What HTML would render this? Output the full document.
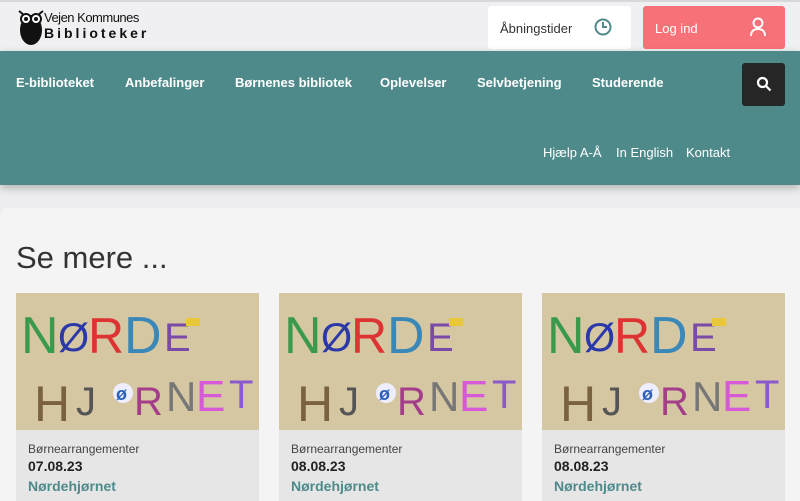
<!DOCTYPE html><html><head><meta charset="utf-8"><style>
*{margin:0;padding:0;box-sizing:border-box}
body{width:800px;height:501px;overflow:hidden;background:#ededef;font-family:"Liberation Sans",sans-serif;position:relative}
.top{position:absolute;left:0;top:0;width:800px;height:51px;background:#f0f0f2;border-top:2px solid #d8d8da}
.nav{position:absolute;left:0;top:51px;width:800px;height:134px;background:#4f8a8b;box-shadow:0 3px 8px rgba(0,0,0,.25)}
.nav .m{position:absolute;color:#fff;font-size:13px;font-weight:bold;top:24px}
.nav .s{position:absolute;color:#fff;font-size:13px;font-weight:normal;top:94px}
.btn{position:absolute;top:4px;height:43px;border-radius:3px;font-size:13px}
.main{position:absolute;left:0;top:208px;width:800px;height:293px;background:#f4f4f5;border-radius:8px 0 0 0}
h1{position:absolute;left:16px;top:240px;font-size:31px;font-weight:normal;color:#333}
.card{position:absolute;top:293px;width:243px;height:208px;background:#e6e6e6}
.card svg{display:block}
.card .c{position:absolute;left:12px;top:149px;font-size:12px;color:#444}
.card .d{position:absolute;left:12px;top:165px;font-size:14px;font-weight:bold;color:#222}
.card .t{position:absolute;left:12px;top:185px;font-size:14px;font-weight:bold;color:#4f8a8b}
</style></head><body>
<div class="top">
 <svg style="position:absolute;left:16px;top:6px" width="30" height="38" viewBox="0 0 30 38"><ellipse cx="15" cy="22" rx="11" ry="15" fill="#111"/><circle cx="10" cy="11" r="5" fill="#fff" stroke="#111" stroke-width="2"/><circle cx="20" cy="11" r="5" fill="#fff" stroke="#111" stroke-width="2"/><circle cx="10" cy="11" r="2" fill="#111"/><circle cx="20" cy="11" r="2" fill="#111"/><path d="M3 3l5 4M27 3l-5 4" stroke="#111" stroke-width="2"/></svg>
 <div style="position:absolute;left:44px;top:8px;font-size:13px;letter-spacing:-.5px;color:#111">Vejen Kommunes</div>
 <div style="position:absolute;left:44px;top:23px;font-size:14px;font-weight:bold;letter-spacing:3px;color:#111">Biblioteker</div>
 <div class="btn" style="left:488px;width:143px;background:#fff"><span style="position:absolute;left:12px;top:15px;color:#333">Åbningstider</span>
 <svg style="position:absolute;left:106px;top:12px" width="18" height="18" viewBox="0 0 18 18" fill="none" stroke="#4f8a8b" stroke-width="2"><circle cx="9" cy="9" r="7.5"/><path d="M9 4v5h4"/></svg></div>
 <div class="btn" style="left:643px;width:142px;background:#f67278"><span style="position:absolute;left:12px;top:15px;color:#fff">Log ind</span>
 <svg style="position:absolute;left:106px;top:11px" width="18" height="20" viewBox="0 0 18 20" fill="none" stroke="#fff" stroke-width="2"><circle cx="9" cy="6" r="4.5"/><path d="M2 19c0-5 3-7 7-7s7 2 7 7"/></svg></div>
</div>
<div class="nav">
 <span class="m" style="left:16px">E-biblioteket</span><span class="m" style="left:125px">Anbefalinger</span><span class="m" style="left:235px">Børnenes bibliotek</span><span class="m" style="left:380px">Oplevelser</span><span class="m" style="left:477px">Selvbetjening</span><span class="m" style="left:592px">Studerende</span>
 <div style="position:absolute;left:742px;top:12px;width:43px;height:43px;background:#262626;border-radius:3px"><svg style="position:absolute;left:14px;top:13px" width="16" height="16" viewBox="0 0 16 16" fill="none" stroke="#fff" stroke-width="2.2"><circle cx="6.5" cy="6.5" r="4.5"/><path d="M10 10l4.5 4.5"/></svg></div>
 <span class="s" style="left:543px">Hjælp A-Å</span><span class="s" style="left:616px">In English</span><span class="s" style="left:686px">Kontakt</span>
</div>
<div class="main"></div>
<h1>Se mere ...</h1>
<div class="card" style="left:16px"><svg width="243" height="137" viewBox="0 0 243 137"><rect width="243" height="137" fill="#d6c7a3"/><text x="5" y="60" font-size="52" fill="#3a9a4c">N</text><text x="42" y="58" font-size="40" fill="#2b39a8">Ø</text><text x="72" y="60" font-size="50" fill="#d33">R</text><text x="108" y="60" font-size="52" fill="#3a88b8">D</text><text x="148" y="58" font-size="40" fill="#7a4aa8">E</text><rect x="170" y="25" width="14" height="8" fill="#e8c83a"/><text x="18" y="128" font-size="50" fill="#7a6140">H</text><text x="60" y="122" font-size="40" fill="#555">J</text><circle cx="107" cy="100" r="10" fill="#eef"/><text x="100" y="107" font-size="18" fill="#2b5fb8" font-weight="bold">ø</text><text x="118" y="122" font-size="40" fill="#a43e8a">R</text><text x="150" y="118" font-size="42" fill="#777">N</text><text x="180" y="118" font-size="44" fill="#d65ad8">E</text><text x="213" y="115" font-size="40" fill="#8a5acd">T</text></svg><div class="c">Børnearrangementer</div><div class="d">07.08.23</div><div class="t">Nørdehjørnet</div></div>
<div class="card" style="left:279px"><svg width="243" height="137" viewBox="0 0 243 137"><rect width="243" height="137" fill="#d6c7a3"/><text x="5" y="60" font-size="52" fill="#3a9a4c">N</text><text x="42" y="58" font-size="40" fill="#2b39a8">Ø</text><text x="72" y="60" font-size="50" fill="#d33">R</text><text x="108" y="60" font-size="52" fill="#3a88b8">D</text><text x="148" y="58" font-size="40" fill="#7a4aa8">E</text><rect x="170" y="25" width="14" height="8" fill="#e8c83a"/><text x="18" y="128" font-size="50" fill="#7a6140">H</text><text x="60" y="122" font-size="40" fill="#555">J</text><circle cx="107" cy="100" r="10" fill="#eef"/><text x="100" y="107" font-size="18" fill="#2b5fb8" font-weight="bold">ø</text><text x="118" y="122" font-size="40" fill="#a43e8a">R</text><text x="150" y="118" font-size="42" fill="#777">N</text><text x="180" y="118" font-size="44" fill="#d65ad8">E</text><text x="213" y="115" font-size="40" fill="#8a5acd">T</text></svg><div class="c">Børnearrangementer</div><div class="d">08.08.23</div><div class="t">Nørdehjørnet</div></div>
<div class="card" style="left:542px"><svg width="243" height="137" viewBox="0 0 243 137"><rect width="243" height="137" fill="#d6c7a3"/><text x="5" y="60" font-size="52" fill="#3a9a4c">N</text><text x="42" y="58" font-size="40" fill="#2b39a8">Ø</text><text x="72" y="60" font-size="50" fill="#d33">R</text><text x="108" y="60" font-size="52" fill="#3a88b8">D</text><text x="148" y="58" font-size="40" fill="#7a4aa8">E</text><rect x="170" y="25" width="14" height="8" fill="#e8c83a"/><text x="18" y="128" font-size="50" fill="#7a6140">H</text><text x="60" y="122" font-size="40" fill="#555">J</text><circle cx="107" cy="100" r="10" fill="#eef"/><text x="100" y="107" font-size="18" fill="#2b5fb8" font-weight="bold">ø</text><text x="118" y="122" font-size="40" fill="#a43e8a">R</text><text x="150" y="118" font-size="42" fill="#777">N</text><text x="180" y="118" font-size="44" fill="#d65ad8">E</text><text x="213" y="115" font-size="40" fill="#8a5acd">T</text></svg><div class="c">Børnearrangementer</div><div class="d">08.08.23</div><div class="t">Nørdehjørnet</div></div>
</body></html>
